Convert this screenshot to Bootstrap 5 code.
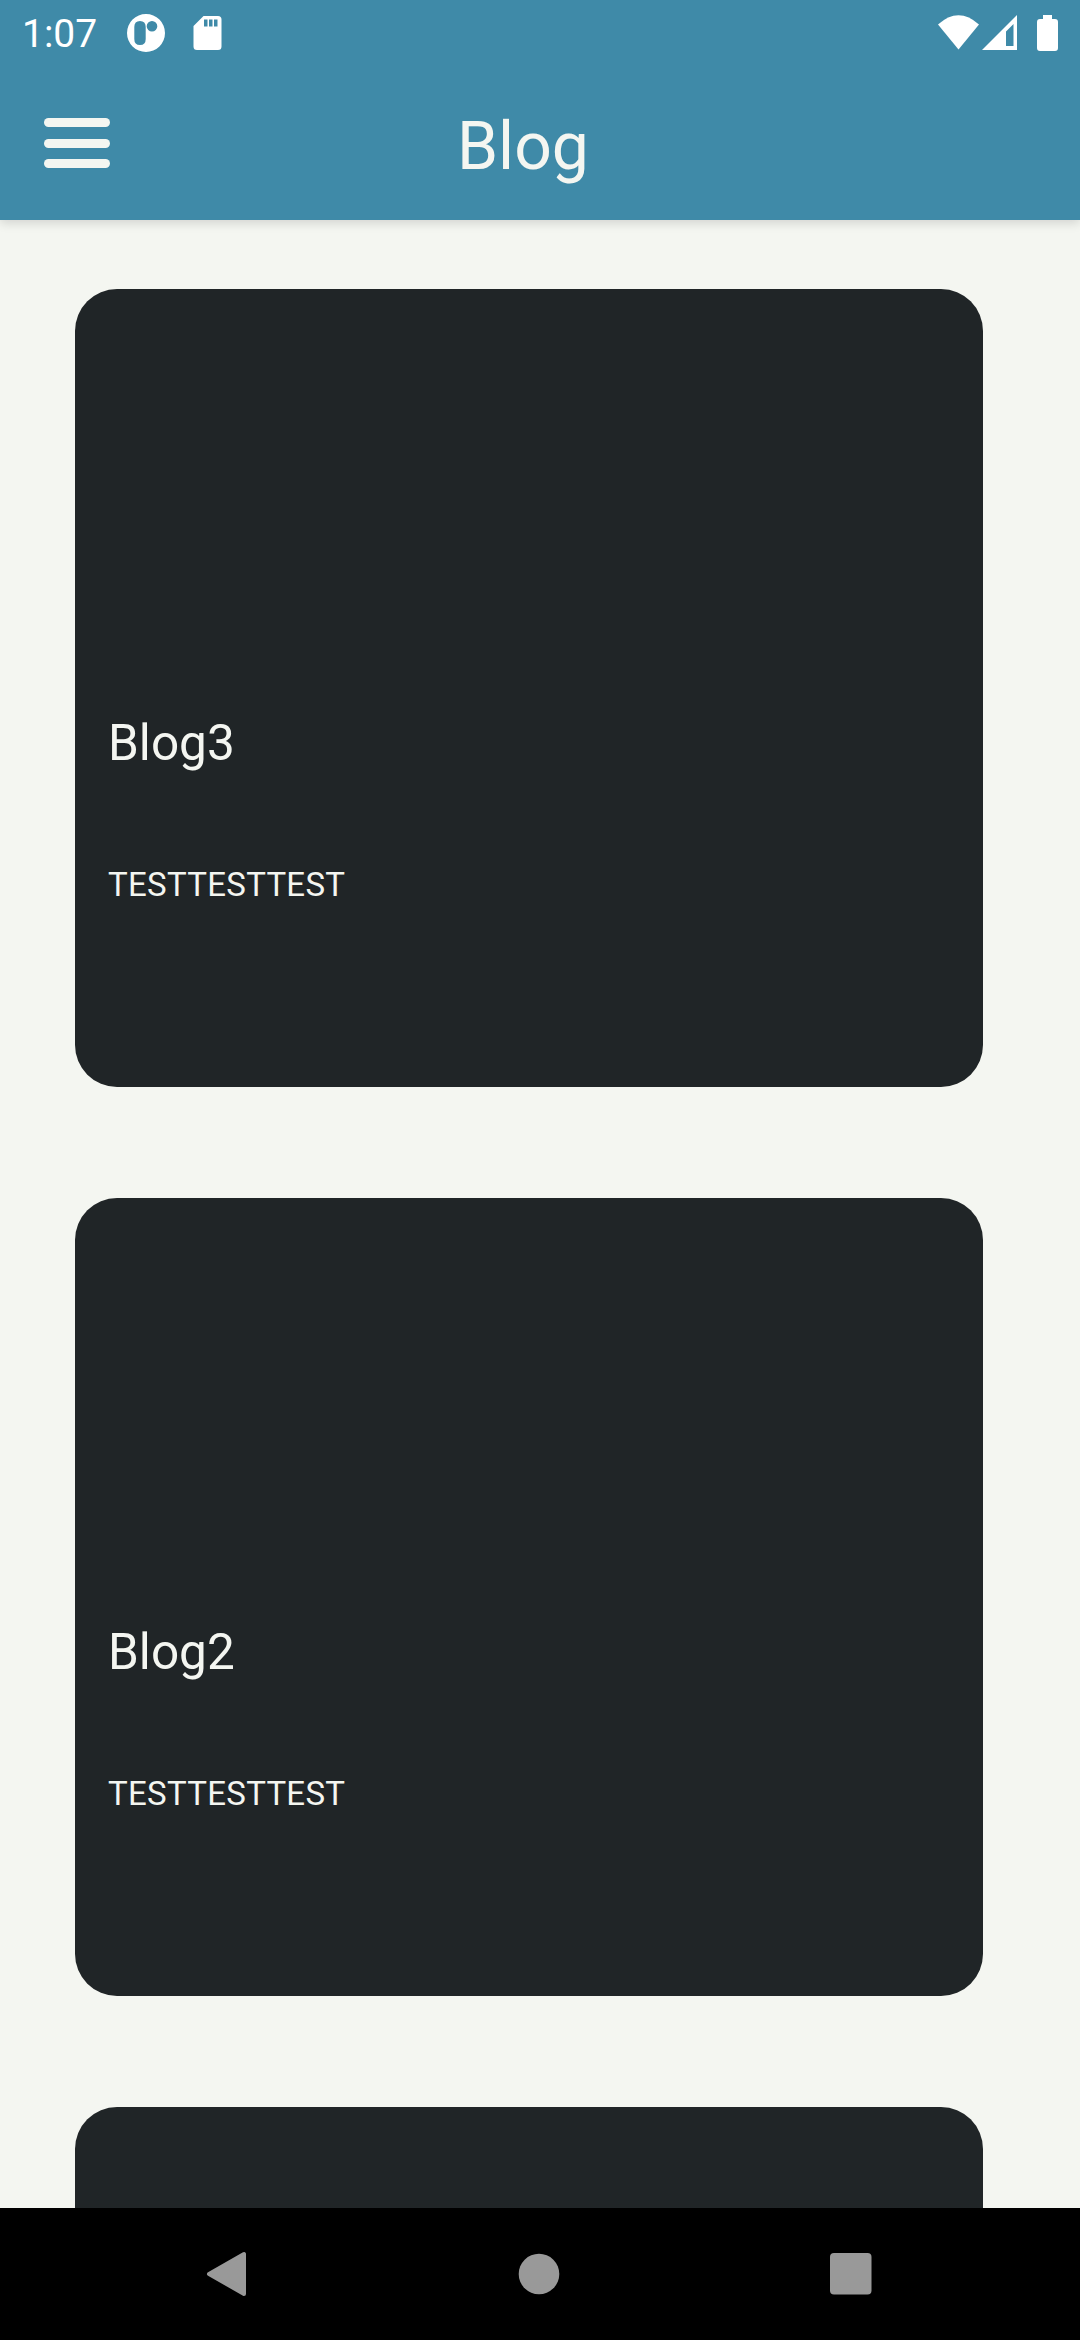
<!DOCTYPE html>
<html lang="en">
<head>
<meta charset="utf-8">
<meta name="viewport" content="width=device-width, initial-scale=1">
<title>Blog</title>
<link href="https://cdn.jsdelivr.net/npm/bootstrap@5.3.0/dist/css/bootstrap.min.css" rel="stylesheet">
<style>
  body { font-family: Roboto, sans-serif; background: #f4f6f1; color: #f4f6f1; }
  svg { display: block; flex: none; }
  .app-top { height: 220px; background: #3f8aa8; box-shadow: 0 3px 10px rgba(0,0,0,.14); z-index: 2; }
  .status-bar { height: 66px; padding: 0 20px 0 22px; color: #fff; }
  .clock { font-size: 39px; line-height: 46px; width: 105px; padding-top: 2px; }
  .title-bar { height: 154px; padding-left: 44px; }
  .menu-btn { width: 66px; height: 50px; }
  .page-title { font-size: 66px; line-height: 78px; font-weight: 400; margin: 0 0 0 347px; padding-top: 7px; }
  .feed { padding: 69px 97px 0 75px; gap: 111px; min-height: 0; }
  .post { --bs-card-bg: #202527; --bs-card-border-width: 0; --bs-card-border-radius: 42px; --bs-card-color: #f4f6f1; height: 798px; flex: none; padding: 424px 33px 0; }
  .post-title { font-size: 49.5px; line-height: 60px; font-weight: 400; margin: 0 0 92px; }
  .post-text { font-size: 33px; line-height: 40px; letter-spacing: .3px; margin: 0; }
  .nav-keys { height: 132px; z-index: 2; background: #000; padding: 0 208px 0 205px; }
</style>
</head>
<body>
<div class="d-flex flex-column vh-100 overflow-hidden">
  <header class="app-top position-relative flex-shrink-0">
    <div class="status-bar d-flex align-items-center">
      <span class="clock">1:07</span>
      <svg width="38" height="38" viewBox="0 0 38 38"><path fill="#fff" fill-rule="evenodd" d="M19 0a19 19 0 1 0 0 38a19 19 0 1 0 0-38zM13 7q5.700 0 5.700 6v12q0 6-5.700 6t-5.700-6v-12q0-6 5.700-6zM25 7a5.300 5.300 0 1 1 0 10.600a5.300 5.300 0 1 1 0-10.600z"/></svg>
      <svg class="ms-4" width="36" height="36" viewBox="0 0 36 36"><path fill="#fff" fill-rule="evenodd" d="M14.500 1H29q3.500 0 3.500 3.500v27q0 3.500-3.500 3.500H8q-3.500 0-3.500-3.500V11zM15 4.500v7h3.500v-7zM20 4.500v7h3.500v-7zM25 4.500v7h3.500v-7z"/></svg>
      <svg class="ms-auto" width="122" height="36" viewBox="938 15 122 36" fill="#fff">
        <path d="M938 24.500Q958.500 6 979 24.500L958.500 49.500z"/>
        <path fill-rule="evenodd" d="M1017 15V50H982zM1013.500 24L1006 31.500V46h7.500z"/>
        <path d="M1043 15h9v4h3q3 0 3 3v26q0 3-3 3h-15q-3 0-3-3V22q0-3 3-3h3z"/>
      </svg>
    </div>
    <div class="title-bar d-flex align-items-center">
      <button class="menu-btn btn p-0 border-0" type="button" aria-label="Menu">
        <svg width="66" height="50" viewBox="0 0 66 50" fill="#f4f6f1"><rect width="66" height="9" rx="4.500"/><rect y="21" width="66" height="9" rx="4.500"/><rect y="41" width="66" height="9" rx="4.500"/></svg>
      </button>
      <h1 class="page-title">Blog</h1>
    </div>
  </header>
  <main class="feed d-flex flex-column flex-grow-1 overflow-hidden">
    <article class="post card">
      <h2 class="post-title">Blog3</h2>
      <p class="post-text">TESTTESTTEST</p>
    </article>
    <article class="post card">
      <h2 class="post-title">Blog2</h2>
      <p class="post-text">TESTTESTTEST</p>
    </article>
    <article class="post card"></article>
  </main>
  <nav class="nav-keys d-flex align-items-center justify-content-between flex-shrink-0">
    <svg width="42" height="46" viewBox="0 0 42 46"><path d="M39 3V43L4 23z" fill="#999" stroke="#999" stroke-width="4" stroke-linejoin="round"/></svg>
    <svg width="42" height="42" viewBox="0 0 42 42"><circle cx="21" cy="21" r="20.300" fill="#999"/></svg>
    <svg width="42" height="42" viewBox="0 0 42 42"><rect width="41.500" height="41.500" rx="4" fill="#999"/></svg>
  </nav>
</div>
<script src="https://cdn.jsdelivr.net/npm/bootstrap@5.3.0/dist/js/bootstrap.bundle.min.js"></script>
</body>
</html>
